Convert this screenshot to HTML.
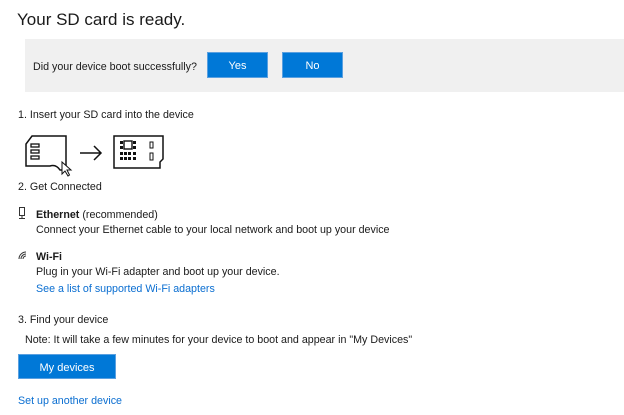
<!DOCTYPE html>
<html><head><style>
body{margin:0;width:624px;height:415px;background:#fff;font-family:"Liberation Sans",sans-serif;color:#1a1a1a;position:relative;overflow:hidden}
.t{position:absolute;white-space:nowrap;font-size:10.7px;line-height:14px}
.btn{position:absolute;background:#0078d7;color:#fff;font-size:11px;text-align:center;border:1px solid #5aa0e0;box-sizing:border-box}
a{color:#0a6ed1;text-decoration:none}
</style></head><body>
<div class="t" style="left:17px;top:8px;font-size:17px;line-height:24px">Your SD card is ready.</div>
<div style="position:absolute;left:25px;top:39px;width:599px;height:53px;background:#f0f0f0"></div>
<div class="t" style="left:33px;top:60px">Did your device boot successfully?</div>
<div class="btn" style="left:207px;top:52px;width:61px;height:26px;line-height:26px">Yes</div>
<div class="btn" style="left:282px;top:52px;width:61px;height:26px;line-height:26px">No</div>
<div class="t" style="left:18px;top:108px">1. Insert your SD card into the device</div>
<svg style="position:absolute;left:20px;top:130px" width="150" height="48" viewBox="0 0 150 48">
<path d="M12 6 H46 V38 L44 40 H40 Q36 34 30 36 H6 V14 Z" fill="none" stroke="#111" stroke-width="1.5"/>
<rect x="11" y="14" width="8" height="3" fill="none" stroke="#111" stroke-width="1.3"/>
<rect x="11" y="20" width="8" height="3" fill="none" stroke="#111" stroke-width="1.3"/>
<rect x="11" y="26" width="8" height="3" fill="none" stroke="#111" stroke-width="1.3"/>
<path d="M42 32 L42 44 L45 41 L48 46 L49.5 45 L47 40 L51 40 Z" fill="#fff" stroke="#111" stroke-width="1"/>
<path d="M60 23 H80 M74 16 L81 23 L74 30" fill="none" stroke="#111" stroke-width="1.5"/>
<path d="M94 6 H143 V29 L140 32 V38 H94 Z" fill="none" stroke="#111" stroke-width="1.5"/>
<rect x="104" y="11" width="8" height="8" fill="none" stroke="#111" stroke-width="1.4"/>
<rect x="100" y="11" width="3" height="3" fill="#111"/><rect x="100" y="16" width="3" height="3" fill="#111"/>
<rect x="113" y="11" width="3" height="3" fill="#111"/><rect x="113" y="16" width="3" height="3" fill="#111"/>
<rect x="100" y="22" width="3" height="3" fill="#111"/><rect x="104" y="22" width="3" height="3" fill="#111"/><rect x="108" y="22" width="3" height="3" fill="#111"/><rect x="113" y="22" width="3" height="3" fill="#111"/>
<rect x="100" y="27" width="3" height="3" fill="#111"/><rect x="104" y="27" width="3" height="3" fill="#111"/><rect x="108" y="27" width="3" height="3" fill="#111"/><rect x="113" y="27" width="3" height="3" fill="#111"/>
<rect x="130" y="12" width="3" height="6" fill="none" stroke="#111"/>
<rect x="130" y="23" width="3" height="7" fill="none" stroke="#111"/>
</svg>
<div class="t" style="left:18px;top:180px">2. Get Connected</div>
<svg style="position:absolute;left:18px;top:207px" width="8" height="12"><rect x="1.5" y="0.5" width="5" height="8" fill="none" stroke="#333"/><path d="M4 9 V11 M1 11.5 H7" stroke="#333"/></svg>
<div class="t" style="left:36px;top:208px"><b>Ethernet</b> (recommended)</div>
<div class="t" style="left:36px;top:223px">Connect your Ethernet cable to your local network and boot up your device</div>
<svg style="position:absolute;left:17px;top:250px" width="11" height="10"><path d="M2 9 A7 7 0 0 1 9 2 M4 9 A5 5 0 0 1 9 4 M6 9 A3 3 0 0 1 9 6" fill="none" stroke="#333"/></svg>
<div class="t" style="left:36px;top:250px"><b>Wi-Fi</b></div>
<div class="t" style="left:36px;top:265px">Plug in your Wi-Fi adapter and boot up your device.</div>
<div class="t" style="left:36px;top:282px"><a>See a list of supported Wi-Fi adapters</a></div>
<div class="t" style="left:18px;top:313px">3. Find your device</div>
<div class="t" style="left:25px;top:333px">Note: It will take a few minutes for your device to boot and appear in "My Devices"</div>
<div class="btn" style="left:18px;top:354px;width:98px;height:25px;line-height:26px">My devices</div>
<div class="t" style="left:18px;top:394px"><a>Set up another device</a></div>
</body></html>
